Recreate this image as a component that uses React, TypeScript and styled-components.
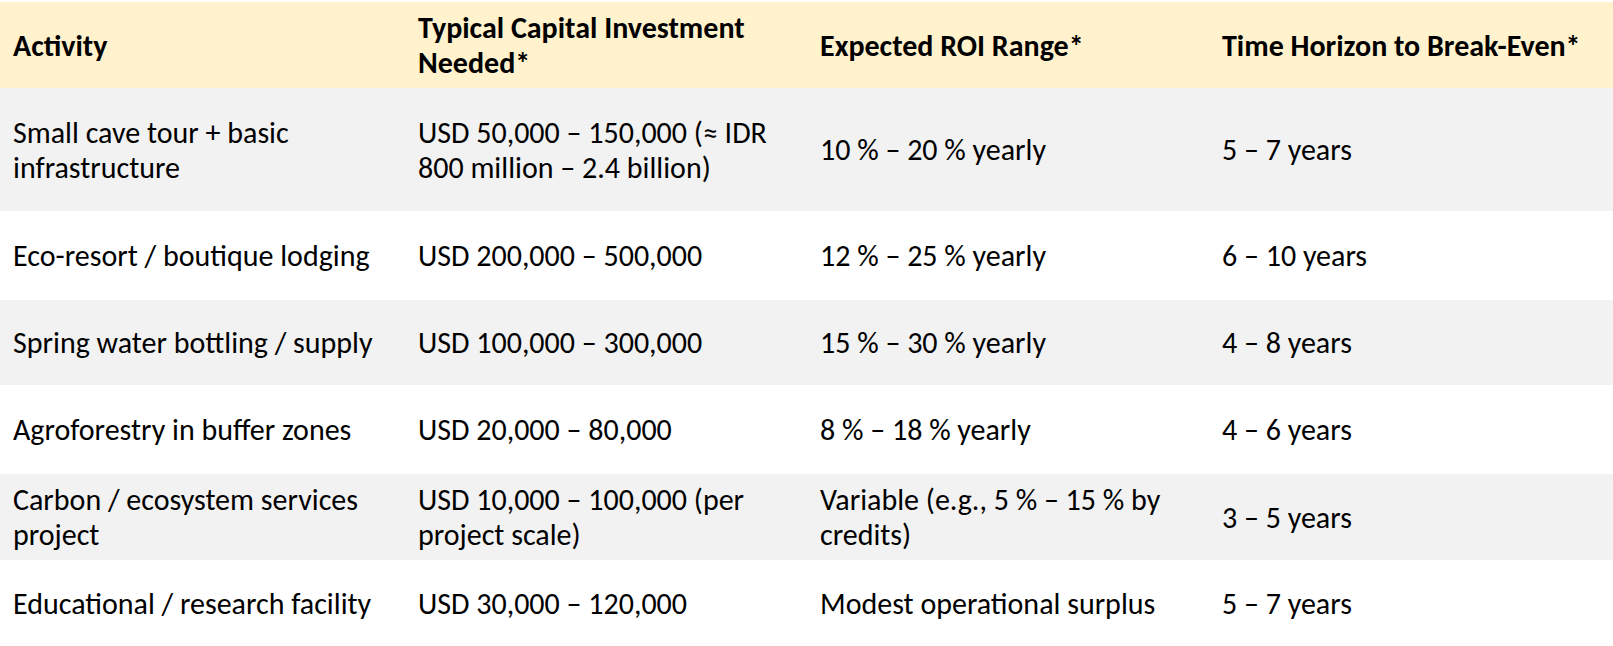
import React from "react";
import styled, { createGlobalStyle } from "styled-components";

const Global = createGlobalStyle`
  html, body { margin: 0; padding: 0; background: #ffffff; }
  body {
    font-family: Carlito, Calibri, Lato, "Liberation Sans", sans-serif;
    color: #000000;
  }
`;

const Page = styled.div`
  padding-top: 2px;
  width: 1613px;
`;

const Table = styled.div`
  display: grid;
  grid-template-columns: 405px 402px 402px 1fr;
`;

const Row = styled.div<{ $h: number; $bg: string; $head?: boolean }>`
  display: contents;
  & > div {
    height: ${(p) => p.$h}px;
    background: ${(p) => p.$bg};
    font-weight: ${(p) => (p.$head ? 700 : 400)};
  }
`;

const Cell = styled.div`
  box-sizing: border-box;
  padding-left: 13px;
  display: flex;
  flex-direction: column;
  justify-content: center;
  font-size: 30px;
  line-height: 35px;
  white-space: nowrap;
`;

const Line = styled.span`
  display: block;
`;

type RowData = { h: number; bg: string; cells: string[][]; head?: boolean };

const HEAD = "#FFF2CC";
const GREY = "#F2F2F2";
const WHITE = "#FFFFFF";

const rows: RowData[] = [
  {
    h: 86,
    bg: HEAD,
    head: true,
    cells: [
      ["Activity"],
      ["Typical Capital Investment", "Needed*"],
      ["Expected ROI Range*"],
      ["Time Horizon to Break-Even*"],
    ],
  },
  {
    h: 123,
    bg: GREY,
    cells: [
      ["Small cave tour + basic", "infrastructure"],
      ["USD 50,000 – 150,000 (≈ IDR", "800 million – 2.4 billion)"],
      ["10 % – 20 % yearly"],
      ["5 – 7 years"],
    ],
  },
  {
    h: 89,
    bg: WHITE,
    cells: [
      ["Eco-resort / boutique lodging"],
      ["USD 200,000 – 500,000"],
      ["12 % – 25 % yearly"],
      ["6 – 10 years"],
    ],
  },
  {
    h: 85,
    bg: GREY,
    cells: [
      ["Spring water bottling / supply"],
      ["USD 100,000 – 300,000"],
      ["15 % – 30 % yearly"],
      ["4 – 8 years"],
    ],
  },
  {
    h: 89,
    bg: WHITE,
    cells: [
      ["Agroforestry in buffer zones"],
      ["USD 20,000 – 80,000"],
      ["8 % – 18 % yearly"],
      ["4 – 6 years"],
    ],
  },
  {
    h: 86,
    bg: GREY,
    cells: [
      ["Carbon / ecosystem services", "project"],
      ["USD 10,000 – 100,000 (per", "project scale)"],
      ["Variable (e.g., 5 % – 15 % by", "credits)"],
      ["3 – 5 years"],
    ],
  },
  {
    h: 86,
    bg: WHITE,
    cells: [
      ["Educational / research facility"],
      ["USD 30,000 – 120,000"],
      ["Modest operational surplus"],
      ["5 – 7 years"],
    ],
  },
];

export default function App() {
  return (
    <Page>
      <Global />
      <Table>
        {rows.map((r, i) => (
          <Row key={i} $h={r.h} $bg={r.bg} $head={r.head}>
            {r.cells.map((lines, j) => (
              <Cell key={j}>
                {lines.map((l, k) => (
                  <Line key={k}>{l}</Line>
                ))}
              </Cell>
            ))}
          </Row>
        ))}
      </Table>
    </Page>
  );
}
